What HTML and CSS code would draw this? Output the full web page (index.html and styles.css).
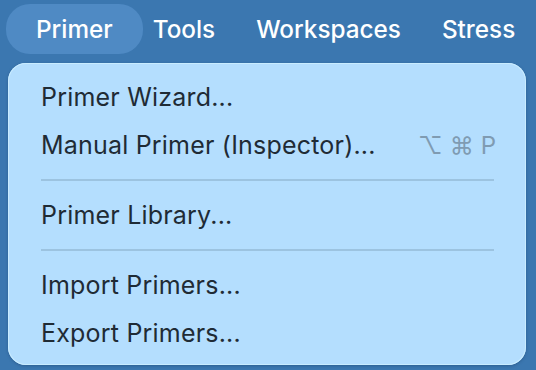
FILE: index.html
```html
<!DOCTYPE html>
<html lang="en">
<head>
    <meta charset="UTF-8">
    <title>Primer menu</title>
    <link rel="stylesheet" href="styles.css">
</head>
<body>
    <div class="menubar">
        <span class="menu-title active">Primer</span>
        <span class="menu-title">Tools</span>
        <span class="menu-title">Workspaces</span>
        <span class="menu-title">Stress</span>
    </div>

    <div class="dropdown">
        <div class="item">Primer Wizard...</div>
        <div class="item">
            <span>Manual Primer (Inspector)...</span>
            <span class="shortcut"><span>⌥</span><span>⌘</span><span>P</span></span>
        </div>
        <div class="separator"></div>
        <div class="item">Primer Library...</div>
        <div class="separator"></div>
        <div class="item">Import Primers...</div>
        <div class="item">Export Primers...</div>
    </div>
</body>
</html>
```

FILE: styles.css
```css
body {
    margin: 0;
    width: 536px;
    height: 370px;
    overflow: hidden;
    background-color: #3b77b0;
    font-family: 'Inter', 'Liberation Sans', sans-serif;
}

.menubar {
    display: flex;
    align-items: center;
    height: 58px;
    padding-left: 6px;
    white-space: nowrap;
}

.menu-title {
    color: white;
    font-size: 24.3px;
    font-weight: 500;
    padding: 10px 0;
    margin-left: 41px;
}

.menu-title.active {
    background-color: #4f8ac4;
    padding: 10px 30px;
    margin-left: 0;
    border-radius: 24px;
}

.menu-title.active + .menu-title {
    margin-left: 10px;
}

.dropdown {
    margin: 5px 10px 0 8px;
    background-color: #b4defe;
    border-radius: 18px;
    box-shadow: 0 0 0 1px #c9ecff inset, 0 1px 3px rgba(20, 50, 90, 0.35);
    padding: 10px 32px 8px 33px;
}

.item {
    display: flex;
    justify-content: space-between;
    align-items: center;
    height: 48px;
    color: #1f2b35;
    font-size: 25px;
    letter-spacing: 0.2px;
}

.shortcut {
    display: flex;
    gap: 7px;
    margin-right: -2px;
    color: #7f9bb2;
    font-size: 24px;
    letter-spacing: 0;
}

.separator {
    height: 2px;
    background-color: #9cc3e0;
    margin: 10px 0;
}
```
